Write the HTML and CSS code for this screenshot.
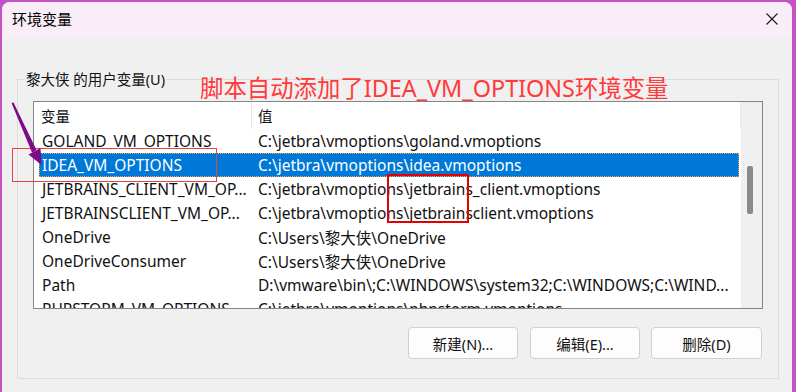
FILE: index.html
```html
<!DOCTYPE html>
<html lang="zh-CN">
<head>
<meta charset="utf-8">
<title>环境变量</title>
<link rel="stylesheet" href="styles.css">
</head>
<body>
<div class="window">
  <div class="titlebar">
    <span class="title">环境变量</span>
    <svg class="close" width="12" height="12" viewBox="0 0 12 12"><path d="M0.5 0.5 L11.5 11.5 M11.5 0.5 L0.5 11.5" stroke="#1a1a1a" stroke-width="1.1" fill="none"/></svg>
  </div>
  <div class="content">
    <div class="group">
      <span class="legend">黎大侠 的用户变量(U)</span>
      <div class="list">
        <div class="list-main">
          <div class="header">
            <div class="hcell hcell1">变量</div>
            <div class="hcell hcell2">值</div>
          </div>
          <div class="row"><div class="c1">GOLAND_VM_OPTIONS</div><div class="c2">C:\jetbra\vmoptions\goland.vmoptions</div></div>
          <div class="row selected"><div class="c1">IDEA_VM_OPTIONS</div><div class="c2">C:\jetbra\vmoptions\idea.vmoptions</div></div>
          <div class="row"><div class="c1">JETBRAINS_CLIENT_VM_OP...</div><div class="c2">C:\jetbra\vmoptions\jetbrains_client.vmoptions</div></div>
          <div class="row"><div class="c1">JETBRAINSCLIENT_VM_OP...</div><div class="c2">C:\jetbra\vmoptions\jetbrainsclient.vmoptions</div></div>
          <div class="row"><div class="c1">OneDrive</div><div class="c2">C:\Users\黎大侠\OneDrive</div></div>
          <div class="row"><div class="c1">OneDriveConsumer</div><div class="c2">C:\Users\黎大侠\OneDrive</div></div>
          <div class="row"><div class="c1">Path</div><div class="c2">D:\vmware\bin\;C:\WINDOWS\system32;C:\WINDOWS;C:\WIND...</div></div>
          <div class="row"><div class="c1">PHPSTORM_VM_OPTIONS</div><div class="c2">C:\jetbra\vmoptions\phpstorm.vmoptions</div></div>
        </div>
        <div class="scrollbar"><div class="thumb"></div></div>
      </div>
      <div class="buttons">
        <button class="btn">新建(N)...</button>
        <button class="btn btn-mid">编辑(E)...</button>
        <button class="btn btn-last">删除(D)</button>
      </div>
    </div>
  </div>
</div>

<div class="note-text">脚本自动添加了IDEA_VM_OPTIONS环境变量</div>
<div class="mark mark-row"></div>
<div class="mark mark-word"></div>
<svg class="arrow" width="50" height="80" viewBox="0 95 50 80">
  <polygon points="11.5,103 13.5,102.5 36.5,150 32,152.5" fill="#7f0a86"/>
  <polygon points="28.5,154.5 40.5,148 41.5,165" fill="#7f0a86"/>
</svg>
</body>
</html>
```

FILE: styles.css
```css
* { box-sizing: border-box; }

body {
  margin: 0;
  width: 796px;
  height: 392px;
  overflow: hidden;
  position: relative;
  background: #c452c3;
  font-family: "Noto Sans", "Noto Sans CJK SC", sans-serif;
  color: #000;
}

.window {
  margin: 2px 4px 0 2px;
  height: 390px;
  background: #f0f0f0;
  border-radius: 8px 8px 0 0;
  overflow: hidden;
  display: flex;
  flex-direction: column;
}

.titlebar {
  height: 35px;
  flex: none;
  background: #f9edf7;
  display: flex;
  align-items: center;
  justify-content: space-between;
  padding: 0 14px 0 10px;
}

.title {
  font-size: 15px;
  line-height: 20px;
  margin-top: -2px;
}

.close {
  display: block;
  margin-top: -2px;
}

.content {
  flex: 1;
  margin-left: -2px;
  border-left: 1px solid #c8c8c8;
  padding: 42px 13px 0 16px;
}

.group {
  position: relative;
  height: 300px;
  border: 1px solid #dcdcdc;
  padding: 21px 15px 0 15px;
}

.legend {
  position: absolute;
  top: -10px;
  left: 7px;
  padding: 0 1px;
  background: #f0f0f0;
  font-size: 14.5px;
  line-height: 18px;
  color: #111;
}

.list {
  height: 208px;
  border: 1px solid #858585;
  background: #fff;
  display: flex;
  overflow: hidden;
}

.list-main {
  flex: 1;
  overflow: hidden;
  font-size: 15.5px;
}

.header {
  height: 27px;
  display: flex;
}

.hcell {
  height: 27px;
  line-height: 29px;
  font-size: 14.5px;
  color: #111;
}

.hcell1 {
  width: 218px;
  padding-left: 7px;
  border-right: 1px solid #e5e5e5;
}

.hcell2 {
  flex: 1;
  padding-left: 6px;
  border-right: 1px solid #e8e8e8;
}

.row {
  height: 24px;
  width: 700px;
  margin-left: 5px;
  display: flex;
  align-items: center;
  white-space: nowrap;
  color: #111;
}

.c1 {
  width: 217px;
  padding-left: 3px;
  overflow: hidden;
}

.c2 {
  flex: 1;
  padding-left: 2px;
  overflow: hidden;
}

.row.selected {
  background: #0078d7;
  color: #fff;
  outline: 1px dotted #f2a23a;
  outline-offset: -1px;
}

.scrollbar {
  width: 21px;
  flex: none;
  background: #f0f0f0;
  padding-top: 64px;
}

.thumb {
  width: 6px;
  height: 48px;
  margin-left: 6px;
  background: #8a8a8a;
  border-radius: 2px;
}

.buttons {
  margin-top: 18px;
  padding-right: 1px;
  display: flex;
  justify-content: flex-end;
}

.btn {
  width: 110px;
  height: 32px;
  border: 1px solid #d0d0d0;
  border-radius: 4px;
  background: #fdfdfd;
  font-family: "Noto Sans", "Noto Sans CJK SC", sans-serif;
  font-size: 14.5px;
  color: #111;
  padding: 0;
}

.btn-mid {
  margin-left: 12px;
}

.btn-last {
  width: 111px;
  margin-left: 11px;
}

.note-text {
  position: absolute;
  left: 200px;
  top: 75px;
  font-size: 23.4px;
  line-height: 26px;
  color: #ff3a3a;
  white-space: nowrap;
}

.mark {
  position: absolute;
}

.mark-row {
  left: 12px;
  top: 148px;
  width: 205px;
  height: 34px;
  border: 1px solid #e04545;
}

.mark-word {
  left: 387px;
  top: 174px;
  width: 82px;
  height: 49px;
  border: 2px solid #e60000;
}

.arrow {
  position: absolute;
  left: 0;
  top: 95px;
}
```
